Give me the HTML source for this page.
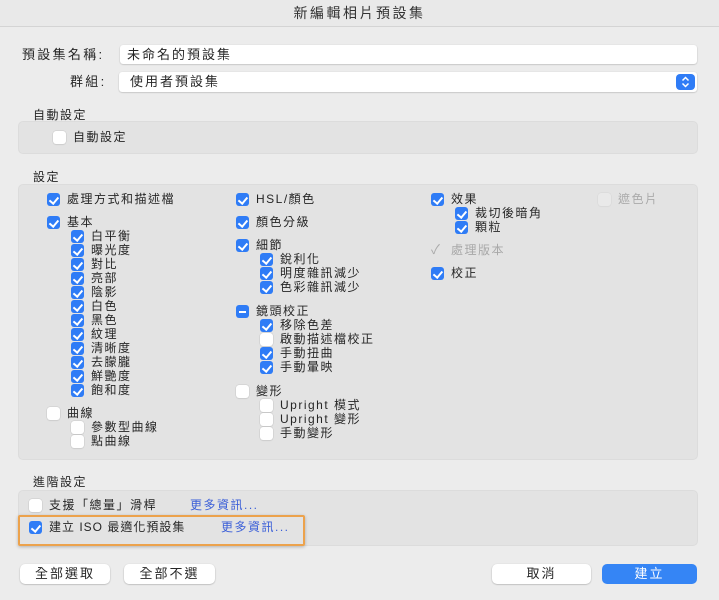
<!DOCTYPE html><html><head><meta charset="utf-8"><style>
*{box-sizing:border-box}
body{margin:0;width:719px;height:600px;background:#ececec;font-family:"Liberation Sans","Noto Sans CJK TC",sans-serif;color:#262626;position:relative;overflow:hidden;font-size:12px;letter-spacing:1.5px}
.a{position:absolute;white-space:nowrap;line-height:14px}
.t{position:absolute;left:0;top:0;width:719px;height:27px;background:#e9e9e9;border-bottom:1px solid #d4d4d4;text-align:center;font-size:14px;letter-spacing:2.5px;line-height:27px;color:#333}
.box{position:absolute;left:18px;width:680px;background:#e3e3e3;border-radius:5px;border:1px solid #dcdcdc}
.cb{position:absolute;width:13px;height:13px;border-radius:3px;background:#fff;box-shadow:0 0 0 .5px #c8c8c8,0 1px 1px rgba(0,0,0,.08)}
.on{background:#2f7cf6;box-shadow:none}
.on::after{content:"";position:absolute;left:4px;top:1.5px;width:3.5px;height:7px;border:solid #fff;border-width:0 2px 2px 0;transform:rotate(40deg)}
.mi{background:#2f7cf6;box-shadow:none}
.mi::after{content:"";position:absolute;left:3px;top:5.5px;width:7px;height:2px;background:#fff}
.dis{opacity:.45}
.inp{position:absolute;background:#fff;border-radius:3px;box-shadow:0 .5px 1.5px rgba(0,0,0,.25);font-size:13px;letter-spacing:2px;line-height:19px;padding-left:7px}
.btn{position:absolute;height:20px;background:#fff;border-radius:5px;box-shadow:0 .5px 1.5px rgba(0,0,0,.3);text-align:center;font-size:13px;letter-spacing:2px;line-height:20px}
.link{color:#3b5fd8}
</style></head><body>
<div class="t">新編輯相片預設集</div>
<div class="a" style="left:22px;top:48px;font-size:13px;letter-spacing:2.3px">預設集名稱:</div>
<div class="inp" style="left:120px;top:45px;width:577px;height:19px">未命名的預設集</div>
<div class="a" style="left:70px;top:75px;font-size:13px;letter-spacing:2.3px">群組:</div>
<div class="inp" style="left:119px;top:72px;width:578px;height:20px;padding-left:11px;line-height:20px">使用者預設集</div>
<div style="position:absolute;left:676px;top:74px;width:19px;height:16px;background:#2f7cf6;border-radius:4px"><svg width="19" height="16" viewBox="0 0 19 16"><path d="M6.5 6.5L9.5 3.5 12.5 6.5M6.5 9.5L9.5 12.5 12.5 9.5" fill="none" stroke="#fff" stroke-width="1.5"/></svg></div>

<div class="a" style="left:33px;top:108px">自動設定</div>
<div class="box" style="top:121px;height:33px"></div>
<div class="cb" style="left:53px;top:131px"></div><div class="a" style="left:73px;top:130px">自動設定</div>

<div class="a" style="left:33px;top:170px">設定</div>
<div class="box" style="top:184px;height:276px"></div>

<div class="cb on" style="left:47px;top:193px"></div><div class="a" style="left:67px;top:192px">處理方式和描述檔</div>
<div class="cb on" style="left:47px;top:216px"></div><div class="a" style="left:67px;top:215px">基本</div>
<div class="cb on" style="left:71px;top:230px"></div><div class="a" style="left:91px;top:229px">白平衡</div>
<div class="cb on" style="left:71px;top:244px"></div><div class="a" style="left:91px;top:243px">曝光度</div>
<div class="cb on" style="left:71px;top:258px"></div><div class="a" style="left:91px;top:257px">對比</div>
<div class="cb on" style="left:71px;top:272px"></div><div class="a" style="left:91px;top:271px">亮部</div>
<div class="cb on" style="left:71px;top:286px"></div><div class="a" style="left:91px;top:285px">陰影</div>
<div class="cb on" style="left:71px;top:300px"></div><div class="a" style="left:91px;top:299px">白色</div>
<div class="cb on" style="left:71px;top:314px"></div><div class="a" style="left:91px;top:313px">黑色</div>
<div class="cb on" style="left:71px;top:328px"></div><div class="a" style="left:91px;top:327px">紋理</div>
<div class="cb on" style="left:71px;top:342px"></div><div class="a" style="left:91px;top:341px">清晰度</div>
<div class="cb on" style="left:71px;top:356px"></div><div class="a" style="left:91px;top:355px">去朦朧</div>
<div class="cb on" style="left:71px;top:370px"></div><div class="a" style="left:91px;top:369px">鮮艷度</div>
<div class="cb on" style="left:71px;top:384px"></div><div class="a" style="left:91px;top:383px">飽和度</div>
<div class="cb" style="left:47px;top:407px"></div><div class="a" style="left:67px;top:406px">曲線</div>
<div class="cb" style="left:71px;top:421px"></div><div class="a" style="left:91px;top:420px">參數型曲線</div>
<div class="cb" style="left:71px;top:435px"></div><div class="a" style="left:91px;top:434px">點曲線</div>

<div class="cb on" style="left:236px;top:193px"></div><div class="a" style="left:256px;top:192px">HSL/顏色</div>
<div class="cb on" style="left:236px;top:216px"></div><div class="a" style="left:256px;top:215px">顏色分級</div>
<div class="cb on" style="left:236px;top:239px"></div><div class="a" style="left:256px;top:238px">細節</div>
<div class="cb on" style="left:260px;top:253px"></div><div class="a" style="left:280px;top:252px">銳利化</div>
<div class="cb on" style="left:260px;top:267px"></div><div class="a" style="left:280px;top:266px">明度雜訊減少</div>
<div class="cb on" style="left:260px;top:281px"></div><div class="a" style="left:280px;top:280px">色彩雜訊減少</div>
<div class="cb mi" style="left:236px;top:305px"></div><div class="a" style="left:256px;top:304px">鏡頭校正</div>
<div class="cb on" style="left:260px;top:319px"></div><div class="a" style="left:280px;top:318px">移除色差</div>
<div class="cb" style="left:260px;top:333px"></div><div class="a" style="left:280px;top:332px">啟動描述檔校正</div>
<div class="cb on" style="left:260px;top:347px"></div><div class="a" style="left:280px;top:346px">手動扭曲</div>
<div class="cb on" style="left:260px;top:361px"></div><div class="a" style="left:280px;top:360px">手動暈映</div>
<div class="cb" style="left:236px;top:385px"></div><div class="a" style="left:256px;top:384px">變形</div>
<div class="cb" style="left:260px;top:399px"></div><div class="a" style="left:280px;top:398px">Upright 模式</div>
<div class="cb" style="left:260px;top:413px"></div><div class="a" style="left:280px;top:412px">Upright 變形</div>
<div class="cb" style="left:260px;top:427px"></div><div class="a" style="left:280px;top:426px">手動變形</div>

<div class="cb on" style="left:431px;top:193px"></div><div class="a" style="left:451px;top:192px">效果</div>
<div class="cb on" style="left:455px;top:207px"></div><div class="a" style="left:475px;top:206px">裁切後暗角</div>
<div class="cb on" style="left:455px;top:221px"></div><div class="a" style="left:475px;top:220px">顆粒</div>
<div class="a" style="left:431px;top:243px;color:#aaa;font-size:13px">✓</div><div class="a" style="left:451px;top:243px;color:#a8a8a8">處理版本</div>
<div class="cb on" style="left:431px;top:267px"></div><div class="a" style="left:451px;top:266px">校正</div>
<div class="cb dis" style="left:598px;top:193px;background:#f2f2f2"></div><div class="a" style="left:618px;top:192px;color:#aaa">遮色片</div>

<div class="a" style="left:33px;top:475px">進階設定</div>
<div class="box" style="top:490px;height:56px"></div>
<div class="cb" style="left:29px;top:499px"></div><div class="a" style="left:49px;top:498px">支援「總量」滑桿</div><div class="a link" style="left:190px;top:498px">更多資訊...</div>
<div style="position:absolute;left:18px;top:515px;width:287px;height:31px;border:2px solid #eca24c;border-radius:2px;box-shadow:0 1px 3px rgba(0,0,0,.25)"></div>
<div class="cb on" style="left:29px;top:521px"></div><div class="a" style="left:49px;top:520px;letter-spacing:1px">建立 ISO 最適化預設集</div><div class="a link" style="left:221px;top:520px">更多資訊...</div>

<div class="btn" style="left:20px;top:564px;width:90px">全部選取</div>
<div class="btn" style="left:124px;top:564px;width:91px">全部不選</div>
<div class="btn" style="left:492px;top:564px;width:99px">取消</div>
<div class="btn" style="left:602px;top:564px;width:95px;background:#3585f5;color:#fff;box-shadow:none">建立</div>
</body></html>
